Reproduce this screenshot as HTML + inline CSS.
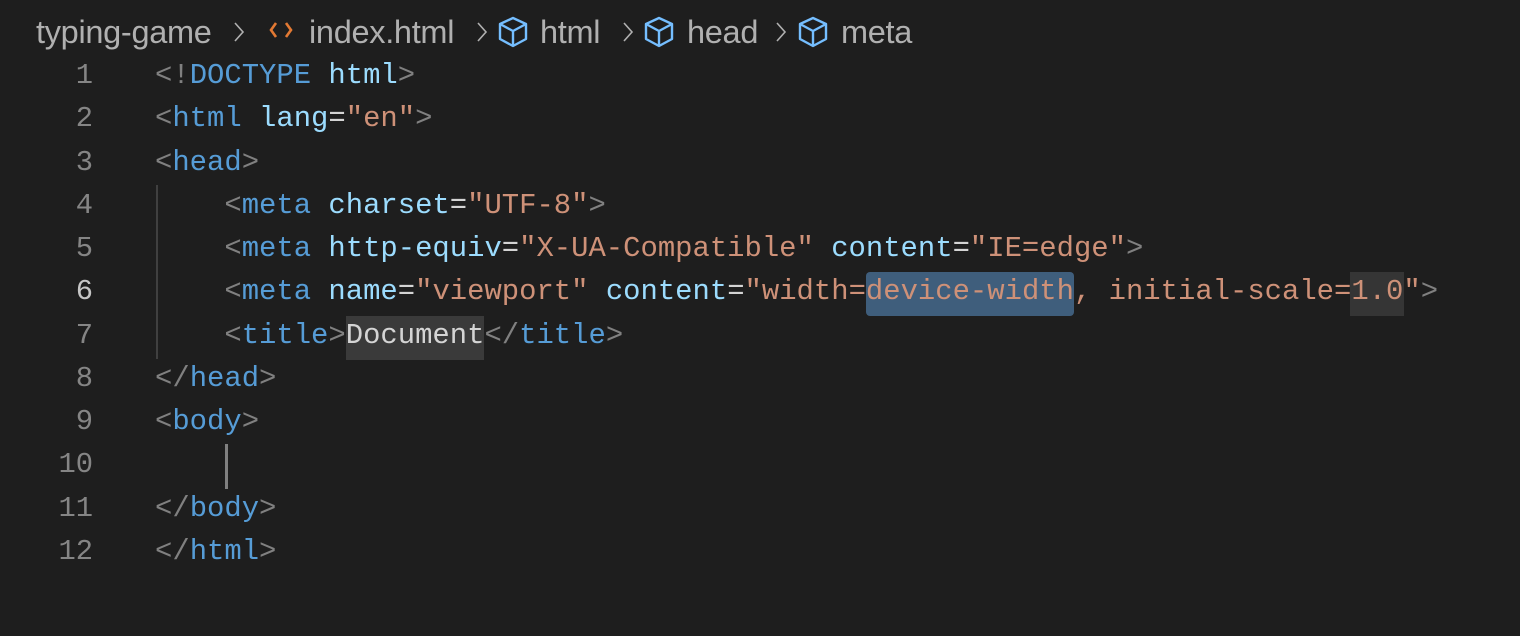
<!DOCTYPE html>
<html><head><style>
body{margin:0;background:#1e1e1e;width:1520px;height:636px;overflow:hidden;position:relative;font-family:"Liberation Mono",monospace}
.bc{position:absolute;top:12px;font-family:"Liberation Sans",sans-serif;font-size:32.5px;letter-spacing:-0.3px;color:#b0b0b0;white-space:nowrap;line-height:40px}
.ln{position:absolute;left:0;width:93px;text-align:right;font-size:28.8px;color:#858585;line-height:43.3px}
.cl{position:absolute;left:155px;font-size:28.9px;color:#d4d4d4;white-space:pre;line-height:43.3px}
.p{color:#808080}.t{color:#569cd6}.a{color:#9cdcfe}.s{color:#ce9178}
svg{position:absolute}
</style></head><body>
<div class="bc" style="left:36px">typing-game</div>
<div class="bc" style="left:309px">index.html</div>
<div class="bc" style="left:540px">html</div>
<div class="bc" style="left:687px">head</div>
<div class="bc" style="left:841px">meta</div>
<svg width="20" height="30" style="left:229px;top:17px"><path d="M6 6l8 9-8 9" stroke="#b0b0b0" stroke-width="1.6" fill="none"/></svg>
<svg width="20" height="30" style="left:472px;top:17px"><path d="M6 6l8 9-8 9" stroke="#b0b0b0" stroke-width="1.6" fill="none"/></svg>
<svg width="20" height="30" style="left:618px;top:17px"><path d="M6 6l8 9-8 9" stroke="#b0b0b0" stroke-width="1.6" fill="none"/></svg>
<svg width="20" height="30" style="left:771px;top:17px"><path d="M6 6l8 9-8 9" stroke="#b0b0b0" stroke-width="1.6" fill="none"/></svg>
<svg width="30" height="30" style="left:266px;top:15px"><path d="M10 8l-5 7 5 7M20 8l5 7-5 7" stroke="#e37933" stroke-width="2.6" fill="none"/></svg>
<svg width="34" height="34" style="left:496px;top:15px"><g stroke="#75beff" stroke-width="2.4" fill="none" stroke-linejoin="round"><path d="M17 3L30 9v15L17 31 4 24V9z"/><path d="M4 9l13 7 13-7M17 16v15"/></g></svg>
<svg width="34" height="34" style="left:642px;top:15px"><g stroke="#75beff" stroke-width="2.4" fill="none" stroke-linejoin="round"><path d="M17 3L30 9v15L17 31 4 24V9z"/><path d="M4 9l13 7 13-7M17 16v15"/></g></svg>
<svg width="34" height="34" style="left:796px;top:15px"><g stroke="#75beff" stroke-width="2.4" fill="none" stroke-linejoin="round"><path d="M17 3L30 9v15L17 31 4 24V9z"/><path d="M4 9l13 7 13-7M17 16v15"/></g></svg>

<div style="position:absolute;left:866px;top:272px;width:208px;height:44px;background:#3f5e7c;border-radius:4px"></div>
<div style="position:absolute;left:1350px;top:272px;width:54px;height:44px;background:#353535"></div>
<div style="position:absolute;left:346px;top:316px;width:138px;height:44px;background:#3a3a3a"></div>
<div style="position:absolute;left:156px;top:185px;width:2px;height:174px;background:#404040"></div>
<div style="position:absolute;left:225px;top:444px;width:3px;height:45px;background:#808080"></div>

<div class="ln" style="top:54px">1</div>
<div class="ln" style="top:97px">2</div>
<div class="ln" style="top:141px">3</div>
<div class="ln" style="top:184px">4</div>
<div class="ln" style="top:227px">5</div>
<div class="ln" style="top:270px;color:#c6c6c6">6</div>
<div class="ln" style="top:314px">7</div>
<div class="ln" style="top:357px">8</div>
<div class="ln" style="top:400px">9</div>
<div class="ln" style="top:443px">10</div>
<div class="ln" style="top:487px">11</div>
<div class="ln" style="top:530px">12</div>

<div class="cl" style="top:54px"><span class="p">&lt;!</span><span class="t">DOCTYPE</span> <span class="a">html</span><span class="p">&gt;</span></div>
<div class="cl" style="top:97px"><span class="p">&lt;</span><span class="t">html</span> <span class="a">lang</span>=<span class="s">"en"</span><span class="p">&gt;</span></div>
<div class="cl" style="top:141px"><span class="p">&lt;</span><span class="t">head</span><span class="p">&gt;</span></div>
<div class="cl" style="top:184px">    <span class="p">&lt;</span><span class="t">meta</span> <span class="a">charset</span>=<span class="s">"UTF-8"</span><span class="p">&gt;</span></div>
<div class="cl" style="top:227px">    <span class="p">&lt;</span><span class="t">meta</span> <span class="a">http-equiv</span>=<span class="s">"X-UA-Compatible"</span> <span class="a">content</span>=<span class="s">"IE=edge"</span><span class="p">&gt;</span></div>
<div class="cl" style="top:270px">    <span class="p">&lt;</span><span class="t">meta</span> <span class="a">name</span>=<span class="s">"viewport"</span> <span class="a">content</span>=<span class="s">"width=device-width, initial-scale=1.0"</span><span class="p">&gt;</span></div>
<div class="cl" style="top:314px">    <span class="p">&lt;</span><span class="t">title</span><span class="p">&gt;</span>Document<span class="p">&lt;/</span><span class="t">title</span><span class="p">&gt;</span></div>
<div class="cl" style="top:357px"><span class="p">&lt;/</span><span class="t">head</span><span class="p">&gt;</span></div>
<div class="cl" style="top:400px"><span class="p">&lt;</span><span class="t">body</span><span class="p">&gt;</span></div>
<div class="cl" style="top:487px"><span class="p">&lt;/</span><span class="t">body</span><span class="p">&gt;</span></div>
<div class="cl" style="top:530px"><span class="p">&lt;/</span><span class="t">html</span><span class="p">&gt;</span></div>
</body></html>
